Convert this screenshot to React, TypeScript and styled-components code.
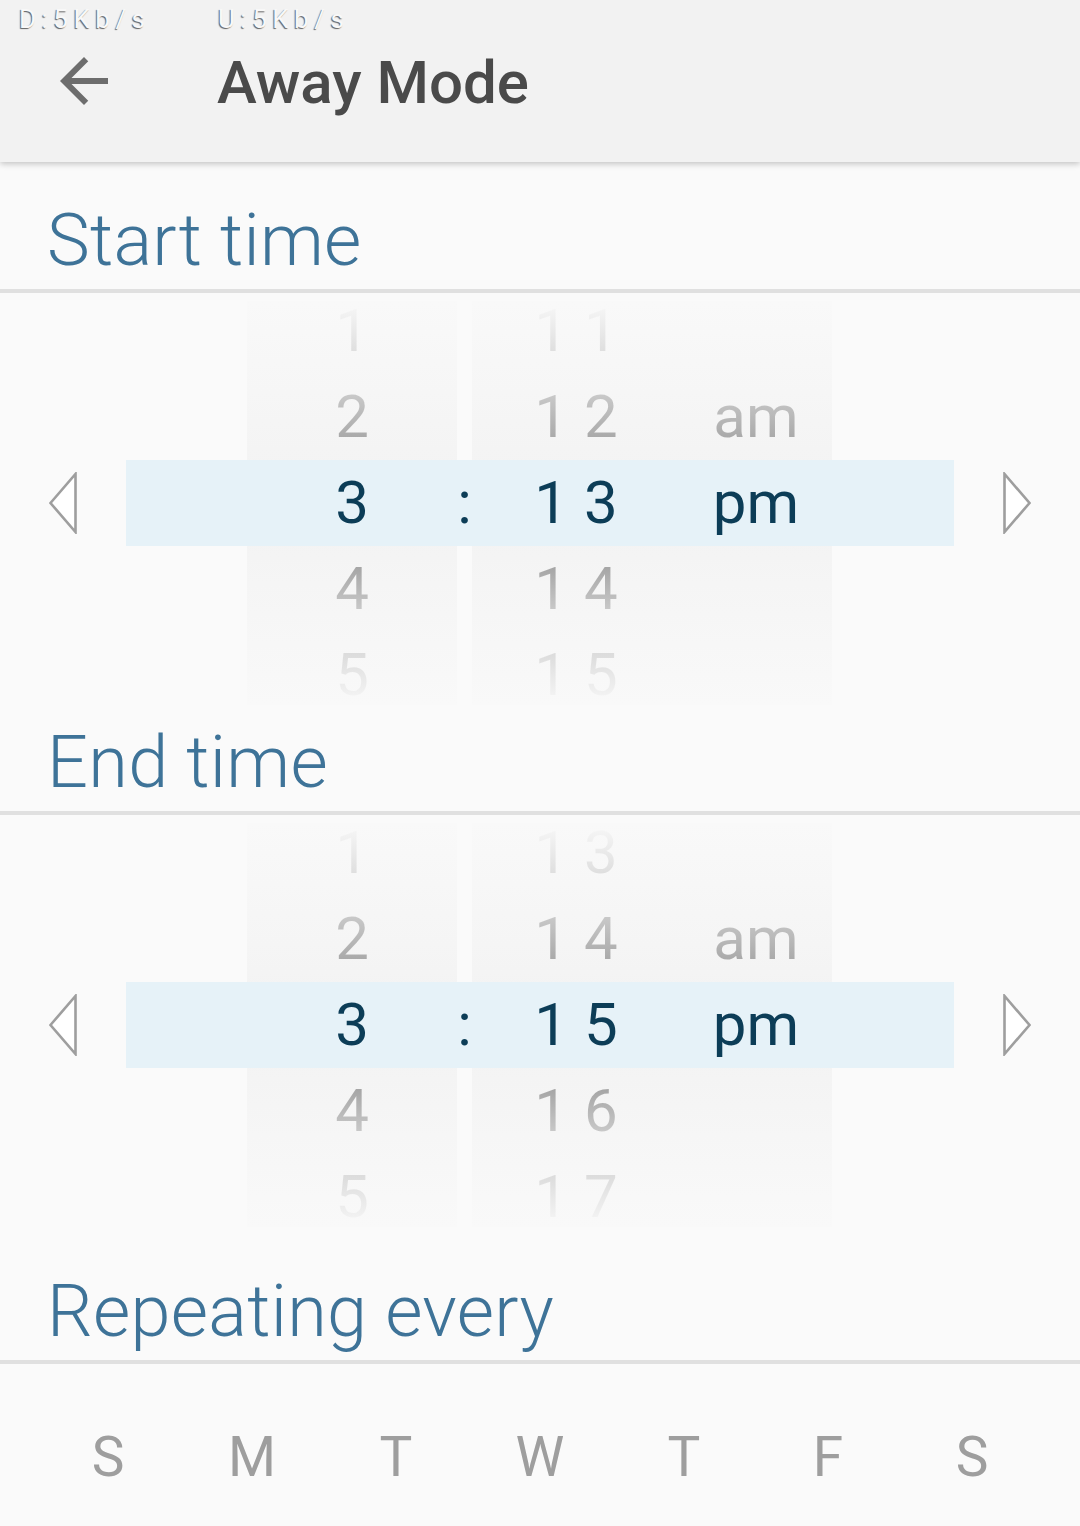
import React from 'react';
import styled, { createGlobalStyle } from 'styled-components';

const GlobalStyle = createGlobalStyle`
  html, body { margin: 0; padding: 0; background: #fafafa; }
  body { font-family: Roboto, "Noto Sans", "Liberation Sans", sans-serif; }
  * { box-sizing: border-box; }
`;

const Page = styled.div`
  width: 1080px;
  min-height: 1526px;
  background: #fafafa;
  overflow: hidden;
`;

const Header = styled.header`
  position: relative;
  z-index: 1;
  height: 162px;
  background: #f2f2f2;
  box-shadow: 0 2px 6px rgba(0, 0, 0, 0.22);
  display: flex;
  flex-direction: column;
`;

const StatusBar = styled.div`
  display: flex;
  padding: 4px 0 0 19px;
  height: 34px;
  font-size: 26px;
  line-height: 30px;
  letter-spacing: 5.5px;
  color: #f8f8f8;
  text-shadow: -1px 1px 1px rgba(0, 0, 0, 0.6);
`;

const StatusItem = styled.span<{ $w?: number }>`
  width: ${(p) => (p.$w ? `${p.$w}px` : 'auto')};
`;

const Toolbar = styled.div`
  display: flex;
  align-items: flex-start;
  gap: 97px;
  margin-top: 11px;
  padding-left: 48px;
  height: 72px;
`;

const BackButton = styled.div`
  width: 72px;
  height: 72px;
  display: flex;
  svg { display: block; }
`;

const Title = styled.h1`
  margin: 0;
  padding-top: 2px;
  font-size: 60px;
  line-height: 72px;
  font-weight: 500;
  color: #4a4a4a;
`;

const Content = styled.main`
  padding-top: 34px;
`;

const SectionLabel = styled.h2<{ $top: number }>`
  margin: 0;
  padding: ${(p) => p.$top}px 0 12px 47px;
  font-size: 72px;
  line-height: 72px;
  font-weight: 300;
  color: #3e7398;
  letter-spacing: 0.3px;
`;

const Divider = styled.div`
  height: 4px;
  background: #e0e0e0;
`;

const Picker = styled.div`
  display: grid;
  grid-template-columns: 126px 121px 210px 15px 208px 152px 122px 126px;
  grid-template-rows: repeat(5, 86px);
  margin-top: -5px;
`;

const ColumnShade = styled.div<{ $col: string }>`
  grid-column: ${(p) => p.$col};
  grid-row: 1 / -1;
  margin: 13px 0;
  background: linear-gradient(
    to bottom,
    #f9f9f9 0%,
    #f5f5f5 30%,
    #f2f2f2 50%,
    #f5f5f5 70%,
    #f9f9f9 100%
  );
`;

const Highlight = styled.div`
  grid-column: 2 / 8;
  grid-row: 3;
  background: #e6f2f8;
`;

type Tone = 'farTop' | 'nearTop' | 'selected' | 'nearBottom' | 'farBottom';

const toneBg: Record<Tone, string> = {
  farTop: 'linear-gradient(to bottom, #f4f4f4 25%, #dedede 75%)',
  nearTop: 'linear-gradient(to bottom, #c8c8c8 25%, #a9a9a9 75%)',
  selected: 'linear-gradient(#0c3d57, #0c3d57)',
  nearBottom: 'linear-gradient(to bottom, #a6a6a6 25%, #c9c9c9 75%)',
  farBottom: 'linear-gradient(to bottom, #dcdcdc 25%, #f3f3f3 75%)',
};

const Cell = styled.div<{ $col: number; $row: number; $tone: Tone; $spaced?: boolean }>`
  grid-column: ${(p) => p.$col};
  grid-row: ${(p) => p.$row};
  justify-self: center;
  font-size: 60px;
  line-height: 86px;
  font-weight: 400;
  white-space: nowrap;
  letter-spacing: ${(p) => (p.$spaced ? '16px' : 'normal')};
  margin-right: ${(p) => (p.$spaced ? '-16px' : '0')};
  background: ${(p) => toneBg[p.$tone]};
  -webkit-background-clip: text;
  background-clip: text;
  color: transparent;
`;

const ArrowCell = styled.div<{ $col: number }>`
  grid-column: ${(p) => p.$col};
  grid-row: 3;
  display: flex;
  align-items: center;
  justify-content: center;
  svg { display: block; }
`;

const Days = styled.div`
  display: grid;
  grid-template-columns: repeat(7, 1fr);
  padding: 66px 36px 0;
  font-size: 55px;
  line-height: 55px;
  color: #9e9e9e;
  text-align: center;
`;

const Day = styled.span``;

const tones: Tone[] = ['farTop', 'nearTop', 'selected', 'nearBottom', 'farBottom'];

const LeftArrow = () => (
  <svg width="30" height="62" viewBox="0 0 30 62">
    <polygon points="2.5,31 27.5,2 27.5,60" fill="#ffffff" stroke="#9e9e9e" strokeWidth="2.6" strokeLinejoin="miter" />
  </svg>
);

const RightArrow = () => (
  <svg width="30" height="62" viewBox="0 0 30 62">
    <polygon points="2.5,2 2.5,60 27.5,31" fill="#ffffff" stroke="#9e9e9e" strokeWidth="2.6" strokeLinejoin="miter" />
  </svg>
);

type PickerProps = { hours: string[]; minutes: string[]; meridiem: string[] };

const TimePicker = ({ hours, minutes, meridiem }: PickerProps) => (
  <Picker>
    <ColumnShade $col="3" />
    <ColumnShade $col="5 / 7" />
    <Highlight />
    <ArrowCell $col={1}>
      <LeftArrow />
    </ArrowCell>
    <ArrowCell $col={8}>
      <RightArrow />
    </ArrowCell>
    {hours.map((h, i) => (
      <Cell key={`h${i}`} $col={3} $row={i + 1} $tone={tones[i]}>
        {h}
      </Cell>
    ))}
    <Cell $col={4} $row={3} $tone="selected">
      :
    </Cell>
    {minutes.map((m, i) => (
      <Cell key={`m${i}`} $col={5} $row={i + 1} $tone={tones[i]} $spaced>
        {m}
      </Cell>
    ))}
    {meridiem.map((a, i) =>
      a ? (
        <Cell key={`a${i}`} $col={6} $row={i + 1} $tone={tones[i]}>
          {a}
        </Cell>
      ) : null
    )}
  </Picker>
);

export default function App() {
  return (
    <Page>
      <GlobalStyle />
      <Header>
        <StatusBar>
          <StatusItem $w={199}>D:5Kb/s</StatusItem>
          <StatusItem>U:5Kb/s</StatusItem>
        </StatusBar>
        <Toolbar>
          <BackButton>
            <svg width="72" height="72" viewBox="0 0 24 24">
              <path
                d="M20 11H7.83l5.59-5.59L12 4l-8 8 8 8 1.41-1.41L7.83 13H20v-2z"
                fill="#6d6d6d"
              />
            </svg>
          </BackButton>
          <Title>Away Mode</Title>
        </Toolbar>
      </Header>
      <Content>
        <SectionLabel $top={9}>Start time</SectionLabel>
        <Divider />
        <TimePicker
          hours={['1', '2', '3', '4', '5']}
          minutes={['11', '12', '13', '14', '15']}
          meridiem={['', 'am', 'pm', '', '']}
        />
        <SectionLabel $top={9}>End time</SectionLabel>
        <Divider />
        <TimePicker
          hours={['1', '2', '3', '4', '5']}
          minutes={['13', '14', '15', '16', '17']}
          meridiem={['', 'am', 'pm', '', '']}
        />
        <SectionLabel $top={36}>Repeating every</SectionLabel>
        <Divider />
        <Days>
          {['S', 'M', 'T', 'W', 'T', 'F', 'S'].map((d, i) => (
            <Day key={i}>{d}</Day>
          ))}
        </Days>
      </Content>
    </Page>
  );
}
